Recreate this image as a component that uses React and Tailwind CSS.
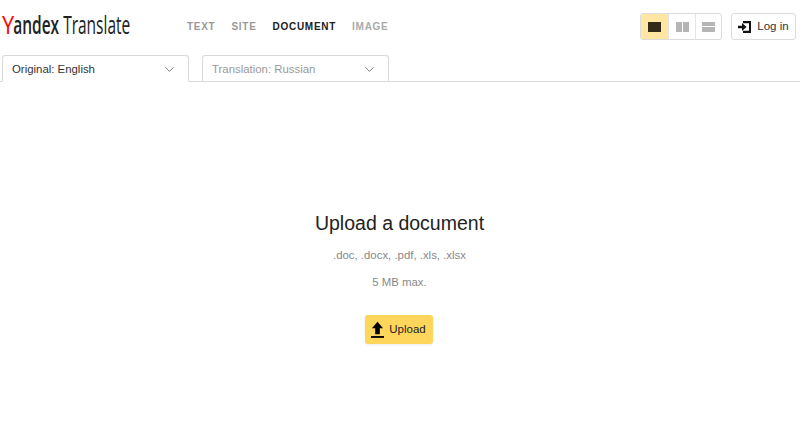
import React from "react";
import { ChevronDown } from "lucide-react";

function LoginIcon() {
  return (
    <svg width="14" height="14" viewBox="0 0 14 14" className="text-[#111]">
      <path d="M5 1h8v12H5v-2.2h6V3.2H5z" fill="currentColor" />
      <path d="M0 5.8h4V3l4.6 4L4 11V8.2H0z" fill="currentColor" />
    </svg>
  );
}

function UploadIcon() {
  return (
    <svg width="13" height="18" viewBox="0 0 14 18" className="text-black">
      <path d="M7 0l6 7H9.5v6.5h-5V7H1z" fill="currentColor" />
      <path d="M0 15.5h14V17.5H0z" fill="currentColor" />
    </svg>
  );
}

function LangTab({ label, active }) {
  return (
    <div
      className={
        "w-[187px] flex items-center justify-between pl-[9px] pr-[11px] pt-[2px] border border-[#d9d9d9] rounded-t-[3px] bg-white " +
        (active ? "border-b-white -mb-px h-[27px] text-[#333]" : "h-[26px] border-b-0 text-[#999]")
      }
    >
      <span className="text-[11.4px]">{label}</span>
      <ChevronDown size={15} strokeWidth={1.25} className="-mt-px text-[#555]" />
    </div>
  );
}

export default function App() {
  return (
    <div className="w-[800px] h-[422px] overflow-hidden bg-white font-['Liberation_Sans',Arial,sans-serif] text-[#222]">
      {/* Header */}
      <div className="h-[55px] flex items-start">
        <div className="w-[187px] pl-[2px] pt-[8px] h-[36px]">
          <div className="origin-left scale-x-[0.62] whitespace-nowrap font-['Open_Sans',sans-serif] text-[25px] leading-[32px] text-[#222]">
            <span className="inline-block origin-left scale-x-[1.4] mr-[4px] text-[#f00]">Y</span>
            <span className="font-semibold">andex</span> Translate
          </div>
        </div>
        <nav className="flex gap-[16px] pt-[21px] text-[10px] leading-[12px] font-bold tracking-[0.72px]">
          <span className="text-[#999]">TEXT</span>
          <span className="text-[#999]">SITE</span>
          <span className="text-[#222]">DOCUMENT</span>
          <span className="text-[#aaa]">IMAGE</span>
        </nav>
        <div className="ml-auto flex items-start gap-[9px] pt-[13px] pr-[4px]">
          <div className="flex h-[27px] border border-[#dcdcdc] rounded-[3px] overflow-hidden">
            <div className="w-[27px] bg-[#ffe7a3] flex items-center justify-center">
              <div className="w-[13px] h-[10px] bg-[#332a1a]" />
            </div>
            <div className="w-[27px] border-l border-[#e5e5e5] flex items-center justify-center gap-[1px]">
              <div className="w-[6px] h-[10px] bg-[#b5b5b5]" />
              <div className="w-[6px] h-[10px] bg-[#b5b5b5]" />
            </div>
            <div className="w-[26px] border-l border-[#e5e5e5] flex flex-col items-center justify-center gap-[1px]">
              <div className="w-[13px] h-[4px] bg-[#b5b5b5]" />
              <div className="w-[13px] h-[5px] bg-[#b5b5b5]" />
            </div>
          </div>
          <div className="h-[27px] w-[65px] border border-[#dcdcdc] rounded-[3px] flex items-center justify-center gap-[5px] text-[11.5px] text-[#333]">
            <LoginIcon />
            <span>Log in</span>
          </div>
        </div>
      </div>

      {/* Language tabs */}
      <div className="h-[26px] flex gap-[13px] pl-[2px] border-b border-[#d9d9d9] box-content">
        <LangTab label="Original: English" active />
        <LangTab label="Translation: Russian" />
      </div>

      {/* Upload area */}
      <div className="flex flex-col items-center pt-[129px] pr-[1px]">
        <h1 className="text-[19.5px] leading-[24px] text-[#222]">Upload a document</h1>
        <p className="mt-[12px] text-[11.4px] leading-[16px] text-[#888]">.doc, .docx, .pdf, .xls, .xlsx</p>
        <p className="mt-[11px] text-[11.4px] leading-[16px] text-[#888]">5 MB max.</p>
        <button className="mt-[25px] mr-[2px] w-[68px] h-[29px] rounded-[3px] bg-[#ffd65c] flex items-center justify-center gap-[5px] text-[11.5px] text-[#222] shadow-[0_1px_3px_rgba(0,0,0,0.08)]">
          <UploadIcon />
          <span>Upload</span>
        </button>
      </div>
    </div>
  );
}
